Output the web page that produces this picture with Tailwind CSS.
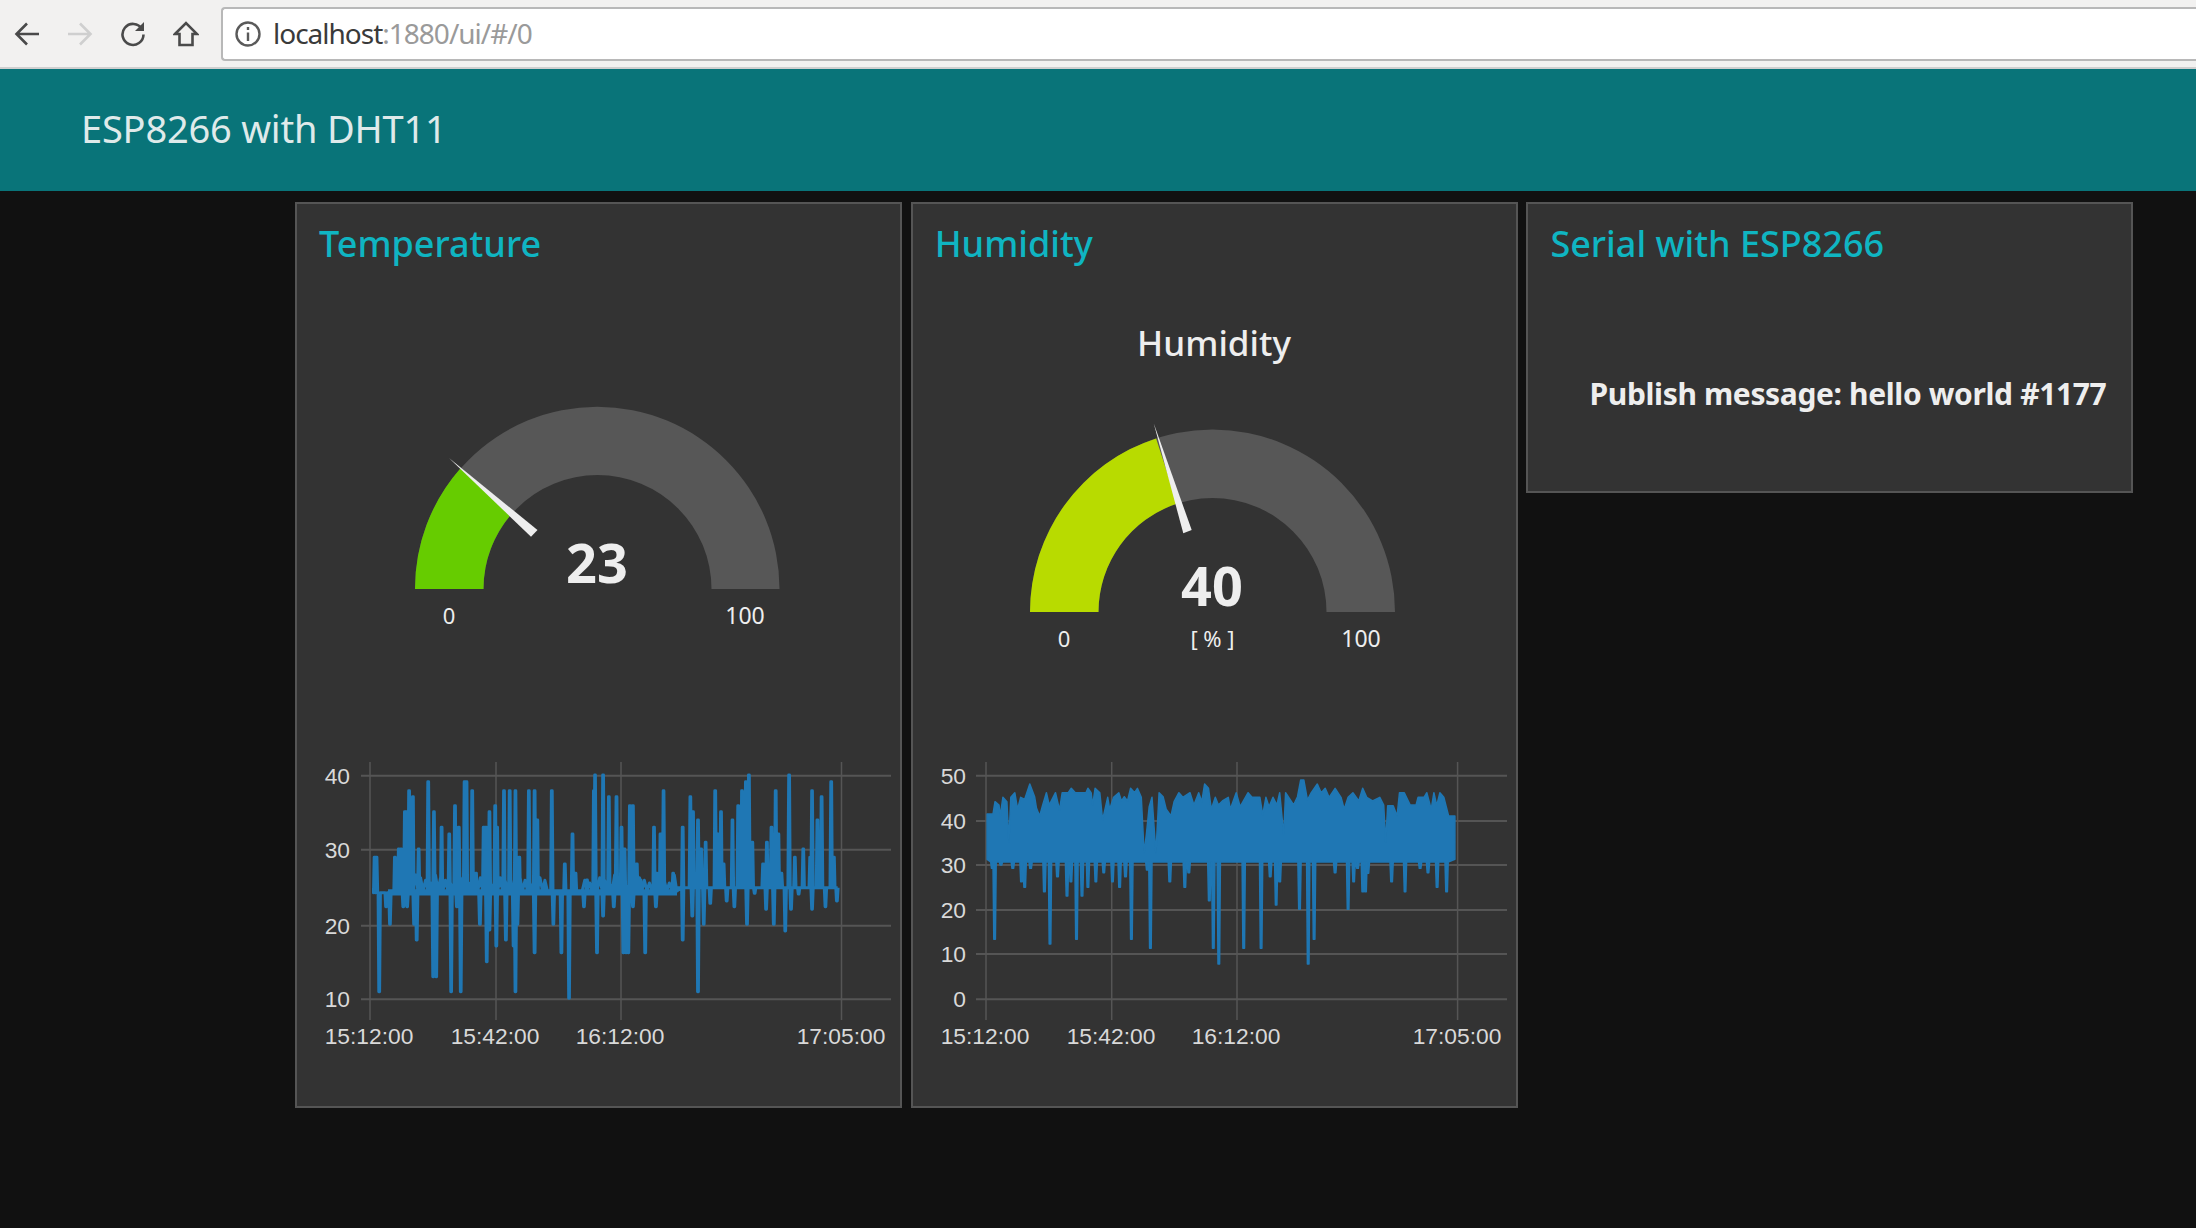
<!DOCTYPE html>
<html lang="en">
<head>
    <meta charset="UTF-8">
    <title>ESP8266 with DHT11</title>
    <script src="https://cdn.jsdelivr.net/npm/@tailwindcss/browser@4"></script>
</head>
<body class="bg-[#111111] font-['Noto_Sans',sans-serif] w-[2196px] h-[1228px] overflow-hidden">
    <!-- Browser toolbar -->
    <div class="h-[69px] bg-[#f2f1f0] border-b-2 border-[#cfcfcf] flex items-center">
        <div class="w-[221px] shrink-0 pl-[14px] flex items-center gap-[27px]">
            <svg class="w-[26px] h-[26px]" viewBox="0 0 26 26" fill="none" stroke="#4a4a4a" stroke-width="2.6"><path d="M25 13H3M13 2.5 2.5 13 13 23.5"/></svg>
            <svg class="w-[26px] h-[26px]" viewBox="0 0 26 26" fill="none" stroke="#cfcfcf" stroke-width="2.6"><path d="M1 13h22M13 2.5 23.5 13 13 23.5"/></svg>
            <svg class="w-[26px] h-[26px]" viewBox="0 0 26 26" fill="none" stroke="#4a4a4a" stroke-width="2.6"><path d="M22 8A10.5 10.5 0 1 0 23.5 13.5"/><path d="M24 1v9h-9z" fill="#4a4a4a" stroke="none"/></svg>
            <svg class="w-[26px] h-[26px]" viewBox="0 0 26 26" fill="none" stroke="#4a4a4a" stroke-width="2.6"><path d="M2 13 13 2l11 11h-4.500v11h-13V13z" stroke-linejoin="miter"/></svg>
        </div>
        <div class="flex-1 h-[54px] bg-white border-2 border-r-0 border-[#b8b8b8] rounded-l-[4px] flex items-center pl-[12px] gap-[12px]">
            <svg class="w-[26px] h-[26px]" viewBox="0 0 26 26" fill="none" stroke="#5a5a5a" stroke-width="2.4"><circle cx="13" cy="13" r="11.500"/><path d="M13 11.500V20M13 6v3"/></svg>
            <span class="text-[28px] tracking-[-1px] text-[#3a3a3a] pb-[2px]">localhost<span class="text-[#9a9a9a]">:1880/ui/#/0</span></span>
        </div>
    </div>

    <!-- Dashboard header -->
    <header class="h-[122px] bg-[#097479] pl-[81px] pb-[3px] flex items-center">
        <h1 class="text-[38px] tracking-[-0.2px] text-[#dfeaea]">ESP8266 with DHT11</h1>
    </header>

    <main class="pl-[295px] pt-[11px] flex items-start gap-[8.3px]">
        <!-- Temperature -->
        <section class="w-[607.4px] h-[906px] shrink-0 bg-[#333333] border-2 border-[#555555]">
            <h2 class="h-[80px] pl-[22px] flex items-center text-[36px] font-medium text-[#0fb5c2]">Temperature</h2>
            <svg class="block" width="603" height="456" viewBox="297 284 603 456">
                <path d="M415 589A182.250 182.250 0 0 1 779.500 589H711.500A114 114 0 0 0 483.500 589Z" fill="#575757"/>
                <path d="M415 589A182.250 182.250 0 0 1 460.300 468.500L511.800 513.600A114 114 0 0 0 483.500 589Z" fill="#66cc00"/>
                <polygon points="449,458 537.500,530 531,536.700" fill="#eeeeee"/>
                <text x="597" y="583" text-anchor="middle" font-size="54" font-weight="700" fill="#eeeeee">23</text>
                <text x="449" y="624" text-anchor="middle" font-size="22" fill="#eeeeee">0</text>
                <text x="745" y="624" text-anchor="middle" font-size="23" fill="#eeeeee">100</text>
            </svg>
            <svg id="tempChart" class="block" width="603" height="320" viewBox="297 740 603 320" font-family="'Liberation Sans',sans-serif" font-size="22.800" fill="#d9d9d9">
                <g stroke="#555555" stroke-width="2">
                    <path d="M361 775.700H891M361 849.700H891M361 925.700H891M361 999.300H891"/>
                    <path d="M370 762V1020M496 762V1020M621 762V1020M841.500 762V1020" stroke-width="1.500"/>
                </g>
                <g text-anchor="end">
                    <text x="350" y="783.700">40</text><text x="350" y="857.700">30</text><text x="350" y="933.700">20</text><text x="350" y="1007.300">10</text>
                </g>
                <g text-anchor="middle">
                    <text x="369" y="1044">15:12:00</text><text x="495" y="1044">15:42:00</text><text x="620" y="1044">16:12:00</text><text x="841" y="1044">17:05:00</text>
                </g>
                <path id="tempLine" fill="none" stroke="#1f77b4" stroke-width="3" stroke-linejoin="round"/>
            </svg>
        </section>

        <!-- Humidity -->
        <section class="w-[607.4px] h-[906px] shrink-0 bg-[#333333] border-2 border-[#555555]">
            <h2 class="h-[80px] pl-[22px] flex items-center text-[36px] font-medium text-[#0fb5c2]">Humidity</h2>
            <svg class="block" width="603" height="456" viewBox="913 284 603 456">
                <text x="1214" y="356" text-anchor="middle" font-size="35" font-weight="500" fill="#eeeeee">Humidity</text>
                <path d="M1030 612A182.500 182.500 0 0 1 1395 612H1326.500A114 114 0 0 0 1098.500 612Z" fill="#575757"/>
                <path d="M1030 612A182.500 182.500 0 0 1 1156.100 438.400L1177.300 503.600A114 114 0 0 0 1098.500 612Z" fill="#b8db00"/>
                <polygon points="1153.700,423.300 1191.700,530 1183.300,533.300" fill="#eeeeee"/>
                <text x="1212" y="606" text-anchor="middle" font-size="54" font-weight="700" fill="#eeeeee">40</text>
                <text x="1064" y="647" text-anchor="middle" font-size="22" fill="#eeeeee">0</text>
                <text x="1212.500" y="647" text-anchor="middle" font-size="22" fill="#eeeeee">[ % ]</text>
                <text x="1361" y="647" text-anchor="middle" font-size="23" fill="#eeeeee">100</text>
            </svg>
            <svg id="humChart" class="block" width="603" height="320" viewBox="913 740 603 320" font-family="'Liberation Sans',sans-serif" font-size="22.800" fill="#d9d9d9">
                <g stroke="#555555" stroke-width="2">
                    <path d="M976 775.700H1507M976 821H1507M976 865H1507M976 910H1507M976 954H1507M976 999.300H1507"/>
                    <path d="M986 762V1020M1111.700 762V1020M1237 762V1020M1457.600 762V1020" stroke-width="1.500"/>
                </g>
                <g text-anchor="end">
                    <text x="966" y="783.700">50</text><text x="966" y="829">40</text><text x="966" y="873">30</text><text x="966" y="918">20</text><text x="966" y="962">10</text><text x="966" y="1007.300">0</text>
                </g>
                <g text-anchor="middle">
                    <text x="985" y="1044">15:12:00</text><text x="1111" y="1044">15:42:00</text><text x="1236" y="1044">16:12:00</text><text x="1457" y="1044">17:05:00</text>
                </g>
                <path id="humBand" fill="#1f77b4" stroke="#1f77b4" stroke-width="1.500" stroke-linejoin="round"/>
            </svg>
        </section>

        <!-- Serial -->
        <section class="w-[607px] h-[291px] shrink-0 bg-[#333333] border-2 border-[#555555] flex flex-col">
            <h2 class="h-[80px] pl-[22px] flex items-center text-[36px] font-medium text-[#0fb5c2]">Serial with ESP8266</h2>
            <div class="flex-1 pt-[12px] pr-[25px] flex items-center justify-end">
                <span class="text-[30px] font-bold tracking-[-0.36px] text-[#eeeeee]">Publish message: hello world #1177</span>
            </div>
        </section>
    </main>

    <script>
        // Sample readings, read off the two charts as [x, y] in chart space
        const tempUp = [[195,352],[200,352],[248,352],[258,327],[264,327],[274,215],[278,215],[285,152],[295,170],[310,327],[335,125],[350,215],[370,262],[390,282],[405,197],[415,262],[430,125],[435,125],[450,152],[460,400],[480,262],[486,262],[495,215],[510,197],[515,262],[533,152],[548,152],[563,152],[573,352],[598,152],[613,152],[620,240],[637,445],[658,152],[692,372],[712,282],[720,400],[750,420],[768,152],[771,105],[792,105],[807,170],[827,170],[840,262],[848,327],[862,197],[870,197],[880,372],[890,420],[925,262],[932,400],[942,282],[950,152],[975,400],[1000,262],[1020,170],[1027,215],[1040,240],[1048,327],[1060,307],[1085,152],[1092,282],[1100,215],[1107,372],[1130,240],[1145,197],[1155,152],[1165,125],[1173,105],[1182,307],[1210,372],[1220,307],[1232,262],[1243,152],[1250,282],[1258,400],[1278,105],[1293,352],[1315,327],[1333,352],[1338,152],[1352,240],[1363,170],[1388,125],[1395,352]];
        const tempDown = [[207,755],[225,500],[235,553],[270,500],[280,500],[298,553],[305,600],[348,710],[356,710],[395,755],[420,755],[410,500],[470,553],[488,665],[495,570],[513,618],[538,600],[558,618],[563,755],[568,553],[613,638],[662,553],[683,638],[703,775],[742,500],[776,638],[792,528],[820,500],[845,638],[852,638],[858,638],[870,500],[902,638],[930,500],[1000,600],[1025,528],[1040,755],[1055,553],[1072,490],[1115,483],[1135,500],[1168,553],[1188,460],[1218,508],[1238,553],[1268,573],[1283,508],[1303,462],[1338,508],[1373,500],[1403,483]];

        const humTop = [[195,222],[210,222],[215,185],[225,195],[228,228],[235,172],[245,185],[250,305],[255,172],[265,158],[272,208],[280,172],[290,178],[303,132],[315,170],[320,205],[328,228],[335,197],[345,158],[352,195],[368,158],[378,210],[385,158],[400,158],[408,145],[418,158],[445,158],[450,145],[458,158],[462,195],[468,145],[480,158],[487,240],[500,172],[505,208],[515,172],[528,158],[535,183],[542,170],[550,183],[558,145],[568,158],[575,145],[585,172],[592,340],[598,280],[605,200],[612,172],[622,340],[630,158],[640,170],[648,208],[660,228],[668,185],[680,158],[690,172],[708,158],[718,195],[730,158],[738,185],[745,132],[755,145],[762,208],[772,172],[780,195],[790,183],[805,172],[810,208],[825,158],[835,200],[855,158],[865,172],[885,172],[892,225],[900,172],[908,200],[918,172],[928,195],[935,158],[945,285],[950,158],[970,195],[980,170],[988,120],[996,120],[1005,180],[1015,158],[1030,132],[1040,158],[1050,145],[1060,172],[1075,145],[1090,172],[1098,208],[1108,172],[1120,158],[1135,183],[1145,145],[1155,172],[1170,183],[1188,172],[1198,195],[1203,305],[1208,197],[1222,197],[1232,228],[1238,158],[1250,158],[1265,195],[1280,195],[1285,172],[1300,172],[1307,158],[1318,208],[1325,158],[1332,197],[1340,158],[1350,172],[1362,228],[1378,228]];
        const humDown = [[208,385],[214,598],[230,375],[260,385],[282,425],[290,442],[305,385],[340,455],[354,612],[373,410],[397,468],[407,425],[421,598],[435,468],[450,442],[470,425],[490,398],[512,425],[530,442],[545,410],[560,598],[600,390],[608,625],[657,425],[695,442],[705,398],[757,482],[767,625],[781,672],[844,625],[888,625],[911,410],[926,495],[935,425],[985,508],[1007,672],[1022,598],[1075,398],[1108,508],[1122,425],[1132,385],[1145,455],[1152,455],[1158,400],[1218,425],[1252,455],[1290,385],[1310,398],[1333,442],[1357,455]];

        function drawTemperature() {
            const toX = x => (300 + x / 2.613).toFixed(1);
            const toY = y => (740 + y / 3).toFixed(1);
            const spikes = tempUp.concat(tempDown).sort((a, b) => a[0] - b[0]);
            let d = `M${toX(192)} ${toY(445)}`;
            spikes.forEach(([x, y]) => {
                const base = x < 985 ? 458 : 443;
                d += `L${toX(x - 3)} ${toY(base)}L${toX(x - 1)} ${toY(y)}L${toX(x + 1)} ${toY(y)}L${toX(x + 3)} ${toY(base)}`;
            });
            // the levels the sensor sits on most of the time
            d += `M${toX(230)} ${toY(462)}H${toX(985)}M${toX(230)} ${toY(452)}H${toX(985)}M${toX(985)} ${toY(443)}H${toX(1405)}`;
            // small jitter just above the flat line
            for (let x = 270; x < 985; x += 13) {
                if (x > 640 && x < 730) continue;
                d += `M${toX(x)} ${toY(450)}L${toX(x + 6)} ${toY(405 + (x % 4) * 8)}L${toX(x + 12)} ${toY(450)}`;
            }
            document.getElementById('tempLine').setAttribute('d', d);
        }

        function drawHumidity() {
            const toX = x => (910 + x / 2.529).toFixed(1);
            const toY = y => (740 + y / 3).toFixed(1);
            let d = humTop.map(([x, y], i) => `${i ? 'L' : 'M'}${toX(x)} ${toY(y)}`).join('');
            d += `L${toX(1378)} ${toY(358)}`;
            [...humDown].reverse().forEach(([x, y]) => {
                d += `L${toX(x + 4)} ${toY(366)}L${toX(x + 2)} ${toY(y)}L${toX(x - 2)} ${toY(y)}L${toX(x - 4)} ${toY(366)}`;
            });
            d += `L${toX(195)} ${toY(358)}Z`;
            document.getElementById('humBand').setAttribute('d', d);
        }

        drawTemperature();
        drawHumidity();
    </script>
</body>
</html>
